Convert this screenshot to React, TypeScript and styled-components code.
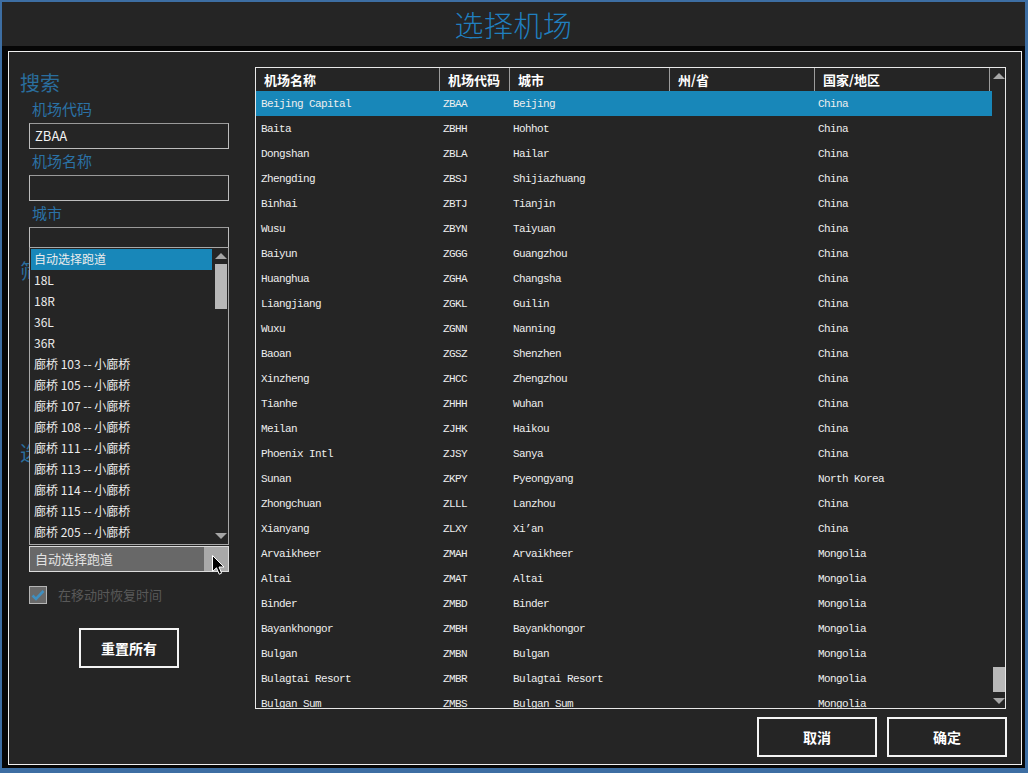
import React from 'react';
import styled, { createGlobalStyle } from 'styled-components';

const GlobalStyle = createGlobalStyle`
  html, body {
    margin: 0;
    padding: 0;
    background: #3d6ea3;
  }
  body {
    font-family: "Noto Sans CJK SC", "Noto Sans", sans-serif;
  }
  * {
    box-sizing: border-box;
  }
`;

const BLUE_TEXT = '#2b72a6';
const HILITE = '#1887b9';

const Desktop = styled.div`
  width: 1028px;
  height: 773px;
  padding: 2px 3px 5px 2px;
`;

const Window = styled.div`
  height: 100%;
  background: #060606;
  display: flex;
  flex-direction: column;
`;

const TitleBar = styled.div`
  height: 44px;
  background: #252525;
  display: flex;
  align-items: center;
  justify-content: center;
  font-size: 29px;
  font-weight: 300;
  color: #207fbf;
  letter-spacing: 0.5px;
`;

const Panel = styled.div`
  flex: 1;
  margin: 5px 3px 3px 6px;
  border: 1px solid #f0f0f0;
  background: #252525;
  display: flex;
  flex-direction: column;
`;

const Main = styled.div`
  display: flex;
  padding: 15px 15px 0 0;
`;

const LeftCol = styled.div`
  width: 246px;
  padding-left: 11px;
  display: flex;
  flex-direction: column;
`;

const SectionTitle = styled.div<{ $top: number }>`
  margin-top: ${p => p.$top}px;
  margin-bottom: 2px;
  height: 24px;
  line-height: 24px;
  font-size: 20px;
  color: #2a6e9e;
  white-space: nowrap;
`;

const Label = styled.div`
  padding-left: 12px;
  height: 23px;
  line-height: 23px;
  font-size: 15px;
  color: ${BLUE_TEXT};
`;

const TextInput = styled.div`
  margin: 3px 0 0 9px;
  width: 200px;
  height: 26px;
  border: 1px solid #bdbdbd;
  border-top-color: #9a9a9a;
  color: #f2f2f2;
  font-size: 13px;
  line-height: 24px;
  padding-left: 5px;
`;

const Spacer = styled.div<{ $h: number }>`
  height: ${p => p.$h}px;
`;

const ComboWrap = styled.div`
  position: relative;
  margin-left: 9px;
  width: 200px;
  height: 26px;
`;

const Combo = styled.div`
  height: 100%;
  border: 1px solid #dcdcdc;
  background: #686868;
  display: flex;
`;

const ComboText = styled.div`
  flex: 1;
  font-size: 13px;
  line-height: 24px;
  padding-left: 5px;
  color: #e2e2e2;
`;

const ComboButton = styled.div`
  width: 24px;
  background: #a9a9a9;
`;

const Popup = styled.div`
  position: absolute;
  left: 0;
  bottom: calc(100% + 1px);
  width: 200px;
  height: 298px;
  border: 1px solid #a8a8a8;
  background: #252525;
  display: flex;
  z-index: 2;
`;

const PopupList = styled.div`
  flex: 1;
  padding: 1px;
  overflow: hidden;
`;

const PopupItem = styled.div<{ $active?: boolean }>`
  height: 21px;
  line-height: 20px;
  padding-left: 3px;
  font-size: 12px;
  color: #ececec;
  white-space: nowrap;
  background: ${p => (p.$active ? HILITE : 'transparent')};
`;

const ScrollCol = styled.div<{ $w: number }>`
  width: ${p => p.$w}px;
  display: flex;
  flex-direction: column;
  align-items: center;
`;

const ArrowBox = styled.div<{ $h: number; $pad: number }>`
  height: ${p => p.$h}px;
  padding-top: ${p => p.$pad}px;
  display: flex;
  justify-content: center;
`;

const Arrow = styled.div<{ $down?: boolean }>`
  width: 0;
  height: 0;
  border-left: 6px solid transparent;
  border-right: 6px solid transparent;
  ${p =>
    p.$down
      ? 'border-top: 6px solid #a6a6a6;'
      : 'border-bottom: 6px solid #a6a6a6;'}
`;

const Thumb = styled.div<{ $h: number; $top?: number }>`
  width: 12px;
  height: ${p => p.$h}px;
  margin-top: ${p => p.$top || 0}px;
  background: #b8b8b8;
`;

const Fill = styled.div`
  flex: 1;
`;

const Cursor = styled.svg`
  position: absolute;
  left: 183px;
  top: 9px;
  z-index: 3;
`;

const CheckRow = styled.div`
  margin: 13px 0 0 9px;
  display: flex;
  align-items: center;
  gap: 11px;
`;

const CheckBox = styled.div`
  width: 18px;
  height: 18px;
  border: 1px solid #b5b5b5;
  background: #6a6a6a;
  display: flex;
  align-items: center;
  justify-content: center;
`;

const CheckLabel = styled.span`
  font-size: 13px;
  color: #595959;
`;

const OutlineButton = styled.div<{ $w: number }>`
  width: ${p => p.$w}px;
  height: 40px;
  border: 2px solid #f4f4f4;
  display: flex;
  align-items: center;
  justify-content: center;
  color: #fff;
  font-size: 14px;
  font-weight: 700;
`;

const ResetWrap = styled.div`
  margin: 24px 0 0 9px;
  width: 200px;
  display: flex;
  justify-content: center;
`;

const TablePane = styled.div`
  margin-left: auto;
  width: 751px;
  height: 642px;
  border: 1px solid #e8e8e8;
  display: flex;
`;

const Grid = styled.div`
  width: 736px;
  display: flex;
  flex-direction: column;
  overflow: hidden;
`;

const HeaderRow = styled.div`
  height: 23px;
  display: grid;
  grid-template-columns: 184px 70px 160px 145px 175px;
`;

const HeaderCell = styled.div`
  border-right: 1px solid #9c9c9c;
  padding-left: 8px;
  font-size: 13px;
  font-weight: 700;
  color: #fff;
  line-height: 23px;
  white-space: nowrap;
`;

const Row = styled.div<{ $active?: boolean }>`
  flex-shrink: 0;
  height: 25px;
  display: grid;
  grid-template-columns: 184px 70px 160px 145px 1fr;
  align-items: center;
  background: ${p => (p.$active ? HILITE : 'transparent')};
  font-family: "Liberation Mono", "DejaVu Sans Mono", monospace;
  font-size: 11px;
  letter-spacing: -0.6px;
  color: #eeeeee;
`;

const Cell = styled.div<{ $pad: number }>`
  padding-left: ${p => p.$pad}px;
  white-space: nowrap;
`;

const Footer = styled.div`
  display: flex;
  justify-content: flex-end;
  gap: 10px;
  margin-top: 8px;
  padding-right: 14px;
`;

const runways = [
  '自动选择跑道',
  '18L',
  '18R',
  '36L',
  '36R',
  '廊桥 103 -- 小廊桥',
  '廊桥 105 -- 小廊桥',
  '廊桥 107 -- 小廊桥',
  '廊桥 108 -- 小廊桥',
  '廊桥 111 -- 小廊桥',
  '廊桥 113 -- 小廊桥',
  '廊桥 114 -- 小廊桥',
  '廊桥 115 -- 小廊桥',
  '廊桥 205 -- 小廊桥',
];

const airports: [string, string, string, string][] = [
  ['Beijing Capital', 'ZBAA', 'Beijing', 'China'],
  ['Baita', 'ZBHH', 'Hohhot', 'China'],
  ['Dongshan', 'ZBLA', 'Hailar', 'China'],
  ['Zhengding', 'ZBSJ', 'Shijiazhuang', 'China'],
  ['Binhai', 'ZBTJ', 'Tianjin', 'China'],
  ['Wusu', 'ZBYN', 'Taiyuan', 'China'],
  ['Baiyun', 'ZGGG', 'Guangzhou', 'China'],
  ['Huanghua', 'ZGHA', 'Changsha', 'China'],
  ['Liangjiang', 'ZGKL', 'Guilin', 'China'],
  ['Wuxu', 'ZGNN', 'Nanning', 'China'],
  ['Baoan', 'ZGSZ', 'Shenzhen', 'China'],
  ['Xinzheng', 'ZHCC', 'Zhengzhou', 'China'],
  ['Tianhe', 'ZHHH', 'Wuhan', 'China'],
  ['Meilan', 'ZJHK', 'Haikou', 'China'],
  ['Phoenix Intl', 'ZJSY', 'Sanya', 'China'],
  ['Sunan', 'ZKPY', 'Pyeongyang', 'North Korea'],
  ['Zhongchuan', 'ZLLL', 'Lanzhou', 'China'],
  ['Xianyang', 'ZLXY', 'Xi’an', 'China'],
  ['Arvaikheer', 'ZMAH', 'Arvaikheer', 'Mongolia'],
  ['Altai', 'ZMAT', 'Altai', 'Mongolia'],
  ['Binder', 'ZMBD', 'Binder', 'Mongolia'],
  ['Bayankhongor', 'ZMBH', 'Bayankhongor', 'Mongolia'],
  ['Bulgan', 'ZMBN', 'Bulgan', 'Mongolia'],
  ['Bulagtai Resort', 'ZMBR', 'Bulagtai Resort', 'Mongolia'],
  ['Bulgan Sum', 'ZMBS', 'Bulgan Sum', 'Mongolia'],
];

const columns = ['机场名称', '机场代码', '城市', '州/省', '国家/地区'];

export default function App() {
  return (
    <Desktop>
      <GlobalStyle />
      <Window>
        <TitleBar>选择机场</TitleBar>
        <Panel>
          <Main>
            <LeftCol>
              <SectionTitle $top={4}>搜索</SectionTitle>
              <Label>机场代码</Label>
              <TextInput>ZBAA</TextInput>
              <Label>机场名称</Label>
              <TextInput />
              <Label>城市</Label>
              <TextInput />
              <SectionTitle $top={6}>筛选</SectionTitle>
              <Spacer $h={156} />
              <SectionTitle $top={0}>选择跑道</SectionTitle>
              <Spacer $h={79} />
              <ComboWrap>
                <Popup>
                  <PopupList>
                    {runways.map((r, i) => (
                      <PopupItem key={r} $active={i === 0}>
                        {r}
                      </PopupItem>
                    ))}
                  </PopupList>
                  <ScrollCol $w={15}>
                    <ArrowBox $h={14} $pad={5}>
                      <Arrow />
                    </ArrowBox>
                    <Thumb $h={45} $top={2} />
                    <Fill />
                    <ArrowBox $h={14} $pad={3}>
                      <Arrow $down />
                    </ArrowBox>
                  </ScrollCol>
                </Popup>
                <Combo>
                  <ComboText>自动选择跑道</ComboText>
                  <ComboButton />
                </Combo>
                <Cursor width="13" height="21" viewBox="0 0 13 21">
                  <path
                    d="M0.5 0.5 L0.5 16.5 L4.5 12.8 L7.2 19.2 L9.6 18.2 L7 12 L12 12 Z"
                    fill="#000"
                    stroke="#fff"
                    strokeWidth="1"
                  />
                </Cursor>
              </ComboWrap>
              <CheckRow>
                <CheckBox>
                  <svg width="14" height="12" viewBox="0 0 14 12">
                    <path
                      d="M1.5 6.5 L5 10 L12.5 2"
                      fill="none"
                      stroke="#3f8fc0"
                      strokeWidth="2.6"
                    />
                  </svg>
                </CheckBox>
                <CheckLabel>在移动时恢复时间</CheckLabel>
              </CheckRow>
              <ResetWrap>
                <OutlineButton $w={100}>重置所有</OutlineButton>
              </ResetWrap>
            </LeftCol>
            <TablePane>
              <Grid>
                <HeaderRow>
                  {columns.map(c => (
                    <HeaderCell key={c}>{c}</HeaderCell>
                  ))}
                </HeaderRow>
                {airports.map((a, i) => (
                  <Row key={a[1]} $active={i === 0}>
                    <Cell $pad={5}>{a[0]}</Cell>
                    <Cell $pad={3}>{a[1]}</Cell>
                    <Cell $pad={3}>{a[2]}</Cell>
                    <Cell $pad={3} />
                    <Cell $pad={3}>{a[3]}</Cell>
                  </Row>
                ))}
              </Grid>
              <ScrollCol $w={13}>
                <ArrowBox $h={16} $pad={5}>
                  <Arrow />
                </ArrowBox>
                <Fill />
                <Thumb $h={25} />
                <ArrowBox $h={16} $pad={6}>
                  <Arrow $down />
                </ArrowBox>
              </ScrollCol>
            </TablePane>
          </Main>
          <Footer>
            <OutlineButton $w={120}>取消</OutlineButton>
            <OutlineButton $w={120}>确定</OutlineButton>
          </Footer>
        </Panel>
      </Window>
    </Desktop>
  );
}
